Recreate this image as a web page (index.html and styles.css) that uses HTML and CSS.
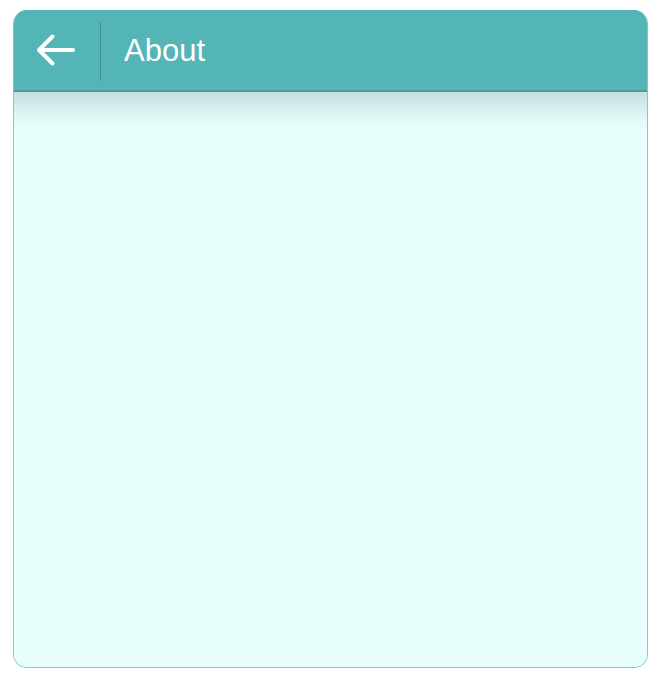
FILE: index.html
```html
<!DOCTYPE html>
<html>
<head>
<meta charset="utf-8">
<link rel="stylesheet" href="styles.css">
</head>
<body>
<div class="card">
  <header class="bar">
    <div class="back">
      <svg width="40" height="34" viewBox="0 0 40 34">
        <path d="M38 17 H4.5 M17.5 3.5 L4 17 L17.5 30.5" fill="none" stroke="#fff" stroke-width="4" stroke-linecap="round" stroke-linejoin="round"/>
      </svg>
    </div>
    <div class="divider"></div>
    <h1 class="title">About</h1>
  </header>
  <main class="content"></main>
</div>
</body>
</html>
```
FILE: styles.css
```css
html, body {
  margin: 0;
  padding: 0;
  background: #ffffff;
}
.card {
  margin: 10px 0 0 13px;
  width: 635px;
  height: 658px;
  box-sizing: border-box;
  border-radius: 14px;
  overflow: hidden;
  display: flex;
  flex-direction: column;
  background: #e9fffe;
  border: 1.5px solid #7ccccc;
  border-top: none;
}
.bar {
  height: 82px;
  flex: none;
  background: #53b5b5;
  border-bottom: 2px solid #4a9d9c;
  display: flex;
  align-items: center;
  box-sizing: border-box;
  margin: 0 -2px;
}
.back {
  width: 88px;
  height: 100%;
  display: flex;
  align-items: center;
  justify-content: center;
}
.back svg {
  display: block;
  margin-left: -2px;
}
.divider {
  width: 1px;
  align-self: stretch;
  margin: 12px 0 9px;
  background: #3f9291;
}
.title {
  margin: 0 0 0 23px;
  font-family: "Liberation Sans", Arial, sans-serif;
  font-weight: normal;
  font-size: 31px;
  color: #ffffff;
  line-height: 1;
  padding-bottom: 0;
}
.content {
  flex: 1;
  background: linear-gradient(to bottom, #c3dedd 0px, #d4eeed 14px, #e4fbfa 30px, #e9fffe 40px);
}
```
